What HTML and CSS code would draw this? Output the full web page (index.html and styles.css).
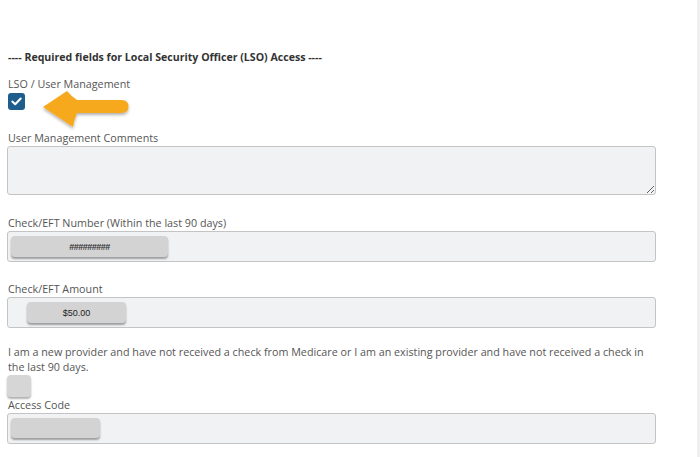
FILE: index.html
```html
<!DOCTYPE html>
<html>
<head>
<meta charset="utf-8">
<link rel="stylesheet" href="styles.css">
</head>
<body>
<div class="page">
  <div class="form">
    <div class="heading">---- Required fields for Local Security Officer (LSO) Access ----</div>

    <div class="label lso-label">LSO / User Management</div>
    <div class="check-row">
      <span class="checkbox">
        <svg width="11" height="9" viewBox="0 0 11 9"><path d="M1.3 4.6 L4.2 7.3 L9.7 1.5" fill="none" stroke="#fff" stroke-width="2" stroke-linecap="round" stroke-linejoin="round"/></svg>
      </span>
      <svg class="arrow" width="96" height="44" viewBox="0 0 96 44">
        <defs>
          <filter id="sh" x="-20%" y="-30%" width="140%" height="170%">
            <feDropShadow dx="0" dy="2" stdDeviation="1.5" flood-color="#000" flood-opacity="0.3"/>
          </filter>
        </defs>
        <path d="M3 17 Q15 9 27 1 Q31 6 37 10 L82 10 Q88.5 10 88.5 16.5 Q88.5 23 82 23 L37 23 Q34 30 33 37 Q18 27 3 17 Z" fill="#f6a91f" filter="url(#sh)"/>
      </svg>
    </div>

    <div class="label">User Management Comments</div>
    <textarea class="textarea" readonly></textarea>

    <div class="label">Check/EFT Number (Within the last 90 days)</div>
    <div class="input">
      <span class="pill pill-number">#########</span>
    </div>

    <div class="label">Check/EFT Amount</div>
    <div class="input">
      <span class="pill pill-amount">$50.00</span>
    </div>

    <p class="para">I am a new provider and have not received a check from Medicare or I am an existing provider and have not received a check in the last 90 days.</p>
    <span class="square"></span>

    <div class="label access-label">Access Code</div>
    <div class="input">
      <span class="pill pill-code"></span>
    </div>
  </div>
</div>
</body>
</html>
```

FILE: styles.css
```css
html, body {
  margin: 0;
  padding: 0;
  background: #ffffff;
}

.page {
  width: 697px;
  height: 457px;
  border-right: 3px solid #efefef;
  overflow: hidden;
  font-family: "Open Sans", "Noto Sans", sans-serif;
  color: #555555;
}

.form {
  width: 649px;
  padding: 50px 0 0 7px;
  display: flex;
  flex-direction: column;
  align-items: flex-start;
}

.heading {
  font-size: 10.6px;
  font-weight: 700;
  line-height: 15px;
  color: #333333;
  padding-left: 1px;
  margin-bottom: 12px;
  white-space: nowrap;
}

.label {
  font-size: 10.75px;
  line-height: 15px;
  padding-left: 1px;
  color: #555555;
}

.check-row {
  position: relative;
  margin-top: 1px;
  margin-bottom: 21px;
  height: 17px;
  padding-left: 1px;
}

.checkbox {
  display: flex;
  align-items: center;
  justify-content: center;
  width: 17px;
  height: 17px;
  border-radius: 3px;
  background: #1f5d8d;
}

.arrow {
  position: absolute;
  left: 33px;
  top: -3px;
}

.textarea {
  display: block;
  box-sizing: border-box;
  width: 649px;
  height: 49px;
  margin: 0 0 21px 0;
  padding: 0;
  border: 1px solid #c4c4c4;
  border-radius: 3px;
  background: #f1f2f3;
  resize: vertical;
  outline: none;
}

.input {
  box-sizing: border-box;
  width: 649px;
  height: 31px;
  border: 1px solid #c4c4c4;
  border-radius: 3px;
  background: #f1f2f3;
  display: flex;
  align-items: flex-start;
  padding: 4px 0 0 3px;
  margin-bottom: 20px;
}

.pill {
  display: flex;
  align-items: center;
  justify-content: center;
  height: 21px;
  border-radius: 4px;
  background: #d3d3d3;
  box-shadow: 0 2px 2px rgba(0, 0, 0, 0.35);
  font-family: "Liberation Sans", Arial, sans-serif;
  font-size: 9px;
  color: #222222;
}

.pill-number {
  width: 157px;
  font-weight: 700;
  letter-spacing: -0.5px;
  color: #333333;
}

.pill-amount {
  width: 99px;
  margin-left: 16px;
}

.pill-code {
  width: 89px;
  height: 20px;
}

.para {
  width: 645px;
  margin: -3px 0 0 0;
  padding-left: 1px;
  font-size: 10.75px;
  line-height: 15px;
  color: #555555;
}

.square {
  display: block;
  width: 24px;
  height: 22px;
  border-radius: 4px;
  background: #d6d6d6;
  box-shadow: 0 2px 2px rgba(0, 0, 0, 0.3);
  margin-top: 0;
}

.access-label {
  margin-top: 1px;
}
```
